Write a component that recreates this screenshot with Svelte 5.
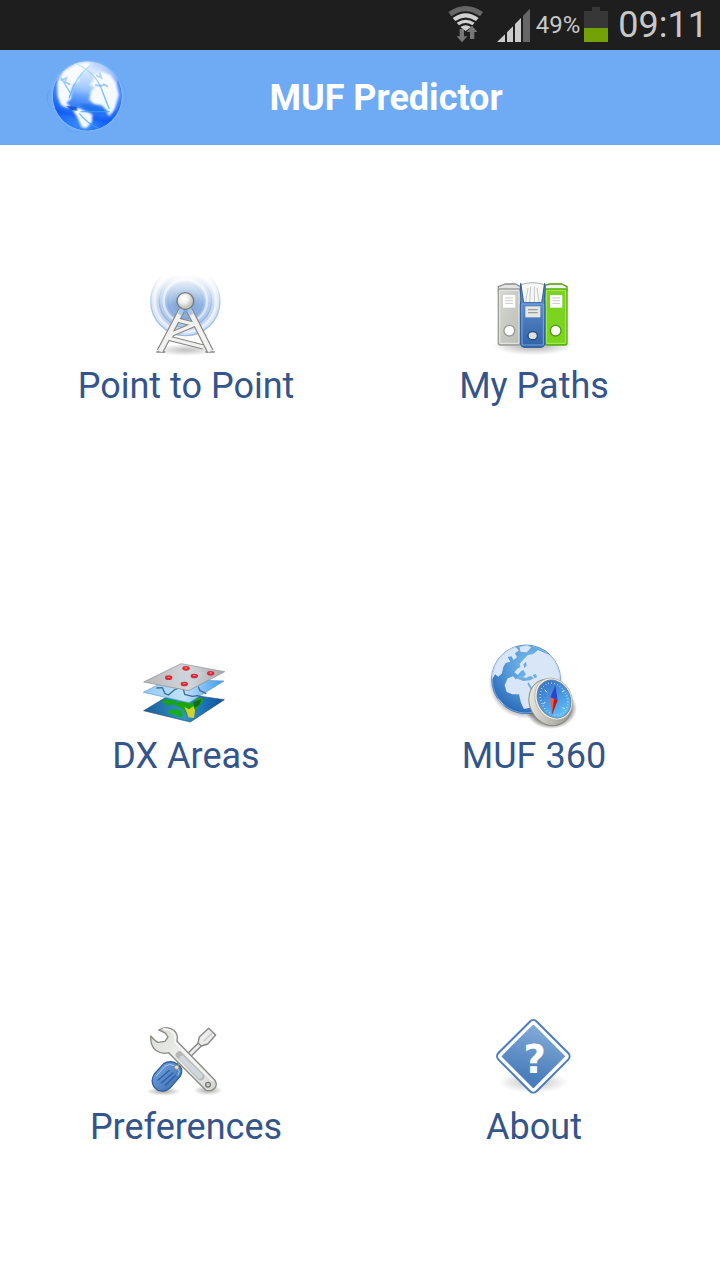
<script lang="ts">
    const battery: number = 49;
    const time: string = '09:11';

    type Item = { icon: string; label: string; viewBox: string };

    const items: Item[] = [
        { icon: 'tower', label: 'Point to Point', viewBox: '6 15 264 264' },
        { icon: 'folders', label: 'My Paths', viewBox: '15 15 264 264' },
        { icon: 'layers', label: 'DX Areas', viewBox: '21 -15 264 264' },
        { icon: 'compass', label: 'MUF 360', viewBox: '30 30 264 264' },
        { icon: 'tools', label: 'Preferences', viewBox: '6 3 264 264' },
        { icon: 'about', label: 'About', viewBox: '15 18 264 264' },
    ];
</script>

{#snippet tower()}
    <defs>
        <linearGradient id="fade" x1="0" y1="0" x2="0" y2="1">
            <stop offset="0.05" stop-color="#000" />
            <stop offset="0.5" stop-color="#ccc" />
            <stop offset="1" stop-color="#fff" />
        </linearGradient>
        <mask id="waveMask" maskUnits="userSpaceOnUse" x="0" y="0" width="288" height="288">
            <rect y="5" width="288" height="200" fill="url(#fade)" />
        </mask>
        <radialGradient id="waveFill">
            <stop offset="0" stop-color="#4179c4" />
            <stop offset="0.5" stop-color="#6695d4" stop-opacity="0.85" />
            <stop offset="1" stop-color="#a5c2ea" stop-opacity="0.4" />
        </radialGradient>
        <radialGradient id="ball" cx="0.4" cy="0.35">
            <stop offset="0" stop-color="#fff" />
            <stop offset="0.6" stop-color="#eeeeec" />
            <stop offset="1" stop-color="#c6c8c2" />
        </radialGradient>
        <radialGradient id="shadow">
            <stop offset="0" stop-color="#000" stop-opacity="0.25" />
            <stop offset="1" stop-color="#000" stop-opacity="0" />
        </radialGradient>
    </defs>
    <ellipse cx="137" cy="240" rx="95" ry="18" fill="url(#shadow)" />
    <g mask="url(#waveMask)">
        <circle cx="136" cy="93" r="106" fill="url(#waveFill)" />
        <g fill="none" stroke="#fff" stroke-opacity="0.55" stroke-width="8">
            <circle cx="136" cy="93" r="92" />
            <circle cx="136" cy="93" r="65" />
        </g>
        <g fill="none" stroke="#5a8fd4" stroke-opacity="0.5" stroke-width="4">
            <circle cx="136" cy="93" r="104" />
            <circle cx="136" cy="93" r="78" />
            <circle cx="136" cy="93" r="52" />
        </g>
    </g>
    <g fill="none" stroke-linejoin="round">
        <g stroke="#85877f" stroke-width="16">
            <path d="M111 150 164 163 96 192 88 205 190 231" />
            <path d="M124 122 60 244M149 122 211 244" stroke-width="21" />
        </g>
        <path d="M49 246H76M196 246H224" stroke="#85877f" stroke-width="5" />
        <g stroke="#f1f1ef" stroke-width="10">
            <path d="M111 150 164 163 96 192 88 205 190 231" />
            <path d="M124 122 60 244M149 122 211 244" stroke-width="14" />
        </g>
        <path d="M127 116 119 134M146 116 155 134" stroke="#a5c6ea" stroke-width="12" />
    </g>
    <circle cx="136" cy="93" r="25" fill="url(#ball)" stroke="#777a73" stroke-width="4" />
{/snippet}

{#snippet folders()}
    <defs>
        <linearGradient id="gray" x1="0" y1="0" x2="1" y2="1">
            <stop offset="0" stop-color="#d6d8d2" />
            <stop offset="1" stop-color="#babdb6" />
        </linearGradient>
        <linearGradient id="blue" x1="0" y1="0" x2="0" y2="1">
            <stop offset="0" stop-color="#6f9bd1" />
            <stop offset="1" stop-color="#2f62a8" />
        </linearGradient>
        <radialGradient id="folderShadow">
            <stop offset="0" stop-color="#000" stop-opacity="0.35" />
            <stop offset="1" stop-color="#000" stop-opacity="0" />
        </radialGradient>
    </defs>
    <ellipse cx="144" cy="226" rx="120" ry="30" fill="url(#folderShadow)" />
    <path d="M40 62V50L60 42H92L106 50V62Z" fill="#e3e4e1" stroke="#8c8f88" stroke-width="4" stroke-linejoin="round" />
    <rect x="40" y="57" width="66" height="168" rx="6" fill="url(#gray)" stroke="#9a9d96" stroke-width="4" />
    <path d="M44 61H102V220H44Z" fill="none" stroke="#e8e9e6" stroke-width="3" />
    <rect x="54" y="75" width="37" height="38" fill="#fff" />
    <path d="M61 84H84M61 92H84M61 100H84" stroke="#c9cbc7" stroke-width="3" />
    <circle cx="73" cy="182" r="16" fill="#fff" stroke="#989b94" stroke-width="4" />
    <path d="M180 62V46L194 42H230L246 50V62Z" fill="#f2f3ef" stroke="#4e9a06" stroke-width="4" stroke-linejoin="round" />
    <rect x="180" y="57" width="66" height="168" rx="6" fill="#7bd41f" stroke="#58a80c" stroke-width="4" />
    <path d="M184 61H242V220H184Z" fill="none" stroke="#a3f050" stroke-width="3" />
    <rect x="195" y="75" width="37" height="38" fill="#fff" />
    <path d="M202 84H225M202 92H225M202 100H225" stroke="#c9cbc7" stroke-width="3" />
    <circle cx="212" cy="182" r="16" fill="#fff" stroke="#4e9a06" stroke-width="4" />
    <path d="M108 44Q142 32 178 44L174 100H112Z" fill="#f6f7f5" stroke="#a7abb0" stroke-width="3" />
    <path d="M122 96 129 54M134 96 137 50M148 96V50M162 96 156 54" stroke="#c6c8c4" stroke-width="3" />
    <path d="M107 40Q104 62 108 88L106 105V222Q108 231 117 232H169Q178 231 180 222V105L178 88Q182 62 179 40L170 98H116Z" fill="url(#blue)" stroke="#2d5c9e" stroke-width="3" />
    <path d="M111 102H175V225H111Z" fill="none" stroke="#7ba5dc" stroke-width="3" />
    <rect x="121" y="109" width="45" height="33" fill="#e6e8e3" />
    <path d="M129 119H158M129 128H158" stroke="#9b9e98" stroke-width="4" />
    <ellipse cx="143" cy="197" rx="14" ry="12" fill="#dfe1dc" stroke="#204a87" stroke-width="4" />
{/snippet}

{#snippet layers()}
    <defs>
        <linearGradient id="sheet" x1="0" y1="0" x2="1" y2="0">
            <stop offset="0" stop-color="#b7b7b9" />
            <stop offset="0.55" stop-color="#d4d6da" />
            <stop offset="1" stop-color="#a5a8ad" />
        </linearGradient>
        <linearGradient id="sky" x1="0" y1="0" x2="1" y2="0">
            <stop offset="0" stop-color="#8fc8f5" />
            <stop offset="0.5" stop-color="#c2e2fb" />
            <stop offset="1" stop-color="#3a9af0" />
        </linearGradient>
        <linearGradient id="sea" x1="0" y1="0" x2="1" y2="0">
            <stop offset="0" stop-color="#1c5c9c" />
            <stop offset="0.5" stop-color="#2f94c4" />
            <stop offset="1" stop-color="#0c4ea4" />
        </linearGradient>
    </defs>
    <path d="M26 182 98 139 204 140 268 149 166 216Z" fill="url(#sea)" stroke="#244d70" stroke-width="2" />
    <path d="M78 155 96 148 126 152 121 162 98 167 88 160Z" fill="#14a51a" />
    <path d="M118 161 139 154 176 160 184 146 202 142 203 156 192 167 180 185 175 202 157 198 149 184 139 175 119 166Z" fill="#1da40f" />
    <path d="M148 171 162 178 175 169 180 181 177 204 160 202 156 188Z" fill="#d5cf35" />
    <path d="M98 184 116 177 138 181 144 195 135 203 122 194 103 191Z" fill="#16ac1c" />
    <path d="M174 155 200 148 193 165 179 174Z" fill="#146f1a" />
    <path d="M25 127 82 98 210 91 267 93 162 158Z" fill="url(#sky)" stroke="#5b9cd0" stroke-width="2" />
    <path d="M64 114 82 113 90 131 100 135 118 120 134 112M142 105 149 133 172 139 188 137 205 143M190 110 195 122 214 131" fill="none" stroke="#3e6c8e" stroke-width="4" stroke-linejoin="round" />
    <path d="M26 96 138 41 269 65 161 122Z" fill="url(#sheet)" stroke="#88898c" stroke-width="2" />
    <path d="M105 96 145 67 207 66 177 103Z" fill="#c6d2de" opacity="0.6" />
    {#each [[153, 55], [101, 83], [178, 78], [227, 70], [148, 102]] as [x, y]}
        <ellipse cx={x} cy={y} rx="11" ry="7" fill="#db2934" />
        <ellipse cx={x} cy={y - 1} rx="4" ry="2" fill="#ff8f8f" />
    {/each}
{/snippet}

{#snippet compass()}
    <defs>
        <radialGradient id="ocean" cx="0.6" cy="0.3" r="0.75">
            <stop offset="0" stop-color="#7fc3ee" />
            <stop offset="0.5" stop-color="#559adb" />
            <stop offset="1" stop-color="#2765b5" />
        </radialGradient>
        <linearGradient id="rim" x1="0" y1="0" x2="1" y2="1">
            <stop offset="0" stop-color="#f5f4ee" />
            <stop offset="0.5" stop-color="#c4c3bb" />
            <stop offset="1" stop-color="#8d8c84" />
        </linearGradient>
        <linearGradient id="dial" x1="0" y1="0" x2="0" y2="1">
            <stop offset="0" stop-color="#3873c8" />
            <stop offset="1" stop-color="#5fc0fb" />
        </linearGradient>
        <clipPath id="earth"><circle cx="138" cy="133" r="103" /></clipPath>
        <radialGradient id="globeShadow">
            <stop offset="0.7" stop-color="#000" stop-opacity="0.55" />
            <stop offset="1" stop-color="#000" stop-opacity="0" />
        </radialGradient>
    </defs>
    <ellipse cx="138" cy="143" rx="112" ry="108" fill="url(#globeShadow)" />
    <ellipse cx="213" cy="220" rx="78" ry="62" fill="url(#globeShadow)" />
    <circle cx="138" cy="133" r="103" fill="url(#ocean)" stroke="#2b65ac" stroke-width="2" />
    <g clip-path="url(#earth)" fill="#d8e6f7">
        <path d="M36 99 51 61 79 40 105 35 117 46 105 55 111 67 101 75 94 64 83 66 91 80 77 84 70 96 66 115 55 125 45 118 36 135Z" />
        <path d="M118 35 142 31 153 37 141 52 122 51Z" />
        <path d="M103 112 112 101 121 96 119 86 132 72 144 60 160 57 174 45 215 62 241 99 246 152 222 171 190 148 178 164 173 181 164 196 150 218 132 222 123 204 117 178 97 178 80 171 74 151 83 130 99 124 107 133 119 124 130 126 138 118 130 104 121 110 114 120Z" />
        <path d="M44 187 56 192 73 211 68 224 37 191Z" />
    </g>
    <g fill="#6eaee3">
        <path d="M106 129 120 124 138 129 152 122 162 130 150 136 130 138Z" />
        <path d="M130 88 138 80 140 92 133 99ZM158 120 168 117 171 127 164 130Z" />
        <path d="M146 142 163 170 157 172 142 146Z" />
    </g>
    <circle cx="138" cy="133" r="101" fill="none" stroke="#a6caed" stroke-opacity="0.55" stroke-width="3" />
    <ellipse cx="211" cy="202" rx="62" ry="72" transform="rotate(-28 211 202)" fill="url(#rim)" stroke="#8b8b83" stroke-width="3" />
    <ellipse cx="221" cy="192" rx="54" ry="65" transform="rotate(-28 221 192)" fill="#f1f0e9" stroke="#aaa99f" stroke-width="2" />
    <ellipse cx="222" cy="192" rx="48" ry="59" transform="rotate(-28 222 192)" fill="url(#dial)" stroke="#6783a3" stroke-width="3" />
    <ellipse cx="222" cy="192" rx="39" ry="50" transform="rotate(-28 222 192)" fill="none" stroke="#c4e0fb" stroke-width="5" stroke-dasharray="2 7" />
    <path d="M194 164 201 172M247 218 255 221M190 207 196 201M246 171 252 167" stroke="#dceeff" stroke-width="3" />
    <path d="M226 151 211 187 233 196Z" fill="#2946ce" />
    <path d="M211 187 215 242 222 193Z" fill="#ff5a37" />
    <path d="M222 192 215 242 233 196Z" fill="#bb1720" />
{/snippet}

{#snippet tools()}
    <defs>
        <linearGradient id="metal" x1="0" y1="0" x2="1" y2="1">
            <stop offset="0" stop-color="#d8dad5" />
            <stop offset="0.5" stop-color="#f1f2ef" />
            <stop offset="1" stop-color="#d4d6d0" />
        </linearGradient>
        <linearGradient id="handle" x1="0" y1="0" x2="1" y2="1">
            <stop offset="0" stop-color="#79a7df" />
            <stop offset="1" stop-color="#376bb0" />
        </linearGradient>
        <radialGradient id="toolShadow">
            <stop offset="0" stop-color="#000" stop-opacity="0.35" />
            <stop offset="1" stop-color="#000" stop-opacity="0" />
        </radialGradient>
    </defs>
    <ellipse cx="70" cy="229" rx="52" ry="13" fill="url(#toolShadow)" />
    <ellipse cx="204" cy="226" rx="44" ry="15" fill="url(#toolShadow)" />
    <path d="M113 154 184 84" stroke="#81847c" stroke-width="17" />
    <path d="M113 154 184 84" stroke="#eeefec" stroke-width="9" />
    <path d="M174 84 178 66 206 40 227 60 203 87 184 93Z" fill="#ecedea" stroke="#858880" stroke-width="4" stroke-linejoin="round" />
    <path d="M191 79 216 55" stroke="#c8cbc4" stroke-width="4" />
    <path d="M43 177 71 146Q85 137 103 142L118 152Q131 165 121 183L92 217Q76 233 54 226L43 217Q30 198 43 177Z" fill="url(#handle)" stroke="#315f9f" stroke-width="4" />
    <path d="M48 184 76 153Q90 144 103 152M115 160Q122 170 113 182" fill="none" stroke="#a5c8f0" stroke-width="3" />
    <path d="M55 195 88 166M64 204 98 174M76 211 107 181" stroke="#2c5fa6" stroke-width="4" stroke-linecap="round" />
    <path d="M56 45Q80 30 102 46Q116 60 111 79L225 196Q233 209 224 220Q212 232 197 225L86 113Q65 119 47 106Q30 90 32 63Q42 75 53 82L75 79L84 66L77 55Q65 47 56 45Z" fill="url(#metal)" stroke="#8a8d85" stroke-width="4" stroke-linejoin="round" />
    <path d="M69 42Q88 41 100 54Q108 66 105 82L218 198" fill="none" stroke="#fafaf9" stroke-width="4" />
    <path d="M118 120 182 185" stroke="#b4b8b7" stroke-width="22" stroke-linecap="round" />
    <path d="M126 130 180 183" stroke="#d0d7dc" stroke-width="16" stroke-linecap="round" />
    <circle cx="204" cy="209" r="7" fill="#cfd1cc" stroke="#777a73" stroke-width="4" />
    <circle cx="110" cy="157" r="7" fill="#d9dbd6" stroke="#888b83" stroke-width="3" />
{/snippet}

{#snippet about()}
    <defs>
        <linearGradient id="sign" x1="0" y1="0" x2="0.6" y2="1">
            <stop offset="0" stop-color="#82abd7" />
            <stop offset="1" stop-color="#4a7dbb" />
        </linearGradient>
        <radialGradient id="signShadow">
            <stop offset="0" stop-color="#000" stop-opacity="0.25" />
            <stop offset="1" stop-color="#000" stop-opacity="0" />
        </radialGradient>
    </defs>
    <ellipse cx="145" cy="217" rx="105" ry="32" fill="url(#signShadow)" />
    <rect x="64" y="58" width="162" height="162" rx="14" transform="rotate(45 145 139)" fill="#fff" stroke="#4a7dbb" stroke-width="6" />
    <rect x="77" y="71" width="136" height="136" rx="3" transform="rotate(45 145 139)" fill="url(#sign)" />
    <text x="149" y="188" text-anchor="middle" class="question">?</text>
{/snippet}

<div class="screen">
    <div class="status">
        <svg class="wifi" viewBox="0 0 108 150" aria-hidden="true">
            <path d="M1 36Q53 0 105 36L96 49Q53 18 10 49Z" fill="#666" />
            <path d="M14 54Q53 25 92 54L84 63Q53 42 22 63ZM26 68Q53 50 80 68L73 76Q53 62 33 76ZM37 81Q53 71 69 81L53 93Z" fill="#d0d0d0" />
            <path d="M35 87H48V109H58L42 127 26 109H35ZM66 117V96H56L72 77 88 96H79V117Z" fill="#777" />
        </svg>
        <svg class="signal" viewBox="0 0 99 150" aria-hidden="true">
            <path d="M0 126 24 103V126ZM30 97 48 79V126H30ZM54 72 72 54V126H54Z" fill="#ccc" />
            <path d="M78 47 99 26V126H78Z" fill="#666" />
        </svg>
        <span class="percent">{battery}%</span>
        <svg class="battery" viewBox="0 0 24 50" aria-hidden="true">
            <path d="M8 7H16V11H24V28H0V11H8Z" fill="#373737" />
            <rect y="28" width="24" height="14" fill="#73a108" />
        </svg>
        <span class="time">{time}</span>
    </div>

    <header>
        <svg class="logo" viewBox="0 0 288 285" aria-hidden="true">
            <defs>
                <linearGradient id="logoSea" x1="0.6" y1="0" x2="0.4" y2="1">
                    <stop offset="0" stop-color="#c5e1ff" />
                    <stop offset="0.4" stop-color="#8fc0ff" />
                    <stop offset="0.6" stop-color="#4a8ef8" />
                    <stop offset="0.8" stop-color="#1561f6" />
                    <stop offset="1" stop-color="#63bdff" />
                </linearGradient>
                <radialGradient id="logoEdge">
                    <stop offset="0.75" stop-color="#0754fb" stop-opacity="0" />
                    <stop offset="1" stop-color="#0754fb" stop-opacity="0.6" />
                </radialGradient>
                <linearGradient id="logoShine" x1="0" y1="0" x2="0" y2="1">
                    <stop offset="0" stop-color="#fff" stop-opacity="0.65" />
                    <stop offset="1" stop-color="#fff" stop-opacity="0" />
                </linearGradient>
                <filter id="soft"><feGaussianBlur stdDeviation="3" /></filter>
                <clipPath id="logoClip"><circle cx="142" cy="138" r="104" /></clipPath>
            </defs>
            <path d="M28 121Q10 156 39 178M234 85Q279 139 240 173M76 211Q68 237 98 246L137 242" fill="none" stroke="#4f9cf5" stroke-width="3" opacity="0.5" />
            <circle cx="142" cy="138" r="105" fill="#8fc2ff" opacity="0.8" filter="url(#soft)" />
            <circle cx="142" cy="138" r="103" fill="url(#logoSea)" />
            <g clip-path="url(#logoClip)">
                <circle cx="142" cy="138" r="104" fill="url(#logoEdge)" />
                <g fill="#f5faff" filter="url(#soft)">
                    <path d="M52 100 70 64 113 40 146 38 137 53 116 80 118 94 98 103 95 120 93 146 79 159 90 168 81 174 63 165 53 140Z" />
                    <path d="M148 105 161 90 158 76 182 66 210 74 228 100 236 134 225 175 208 199 186 166 162 163 148 149 153 123 165 111Z" />
                    <path d="M99 181 116 175 138 184 157 193 156 216 139 235 125 232 114 206Z" />
                    <path d="M91 53 136 37 158 42 134 65 104 68Z" />
                </g>
                <path d="M62 91 79 84 75 96 91 104M166 105 183 108 192 103 204 110M168 76 184 83 178 67" fill="none" stroke="#5591ef" stroke-width="6" opacity="0.6" />
                <path d="M119 163Q163 158 207 184L184 194 134 178Z" fill="#176ee9" opacity="0.7" filter="url(#soft)" />
                <path d="M155 43Q106 79 87 144M112 42Q162 67 181 108L208 178M117 185H210M118 190Q143 221 177 236M63 83 91 129" fill="none" stroke="#36a4f4" stroke-width="4" opacity="0.7" />
                <path d="M77 168 108 171 116 184 97 180Z" fill="#1253c9" opacity="0.8" />
                <ellipse cx="142" cy="84" rx="92" ry="54" fill="url(#logoShine)" />
            </g>
            <circle cx="116" cy="184" r="6" fill="#fff" filter="url(#soft)" />
            <circle cx="213" cy="180" r="6" fill="#e5f8ff" filter="url(#soft)" />
        </svg>
        <h1>MUF Predictor</h1>
    </header>

    <main>
        {#each items as item}
            <button type="button">
                <svg class="icon" viewBox={item.viewBox} aria-hidden="true">
                    {#if item.icon === 'tower'}
                        {@render tower()}
                    {:else if item.icon === 'folders'}
                        {@render folders()}
                    {:else if item.icon === 'layers'}
                        {@render layers()}
                    {:else if item.icon === 'compass'}
                        {@render compass()}
                    {:else if item.icon === 'tools'}
                        {@render tools()}
                    {:else}
                        {@render about()}
                    {/if}
                </svg>
                <span>{item.label}</span>
            </button>
        {/each}
    </main>
</div>

<style>
    :global(body) {
        background: #fff;
    }
    .screen {
        display: flex;
        flex-direction: column;
        min-height: 100vh;
        font-family: Roboto, "Noto Sans", sans-serif;
    }
    .status {
        display: flex;
        align-items: center;
        justify-content: flex-end;
        height: 50px;
        padding-right: 12px;
        background: #1e1e1e;
        color: #c8c8c8;
    }
    .status svg {
        height: 50px;
    }
    .wifi {
        width: 36px;
        margin-right: 13px;
    }
    .signal {
        width: 33px;
        margin-right: 6px;
    }
    .percent {
        margin-right: 4px;
        font-size: 24px;
    }
    .battery {
        width: 24px;
        margin-right: 10px;
    }
    .time {
        font-size: 36px;
    }
    header {
        display: flex;
        align-items: center;
        padding: 0 84px 0 40px;
        background: #6fabf4;
    }
    .logo {
        width: 96px;
        height: 95px;
    }
    h1 {
        flex: 1;
        margin: 0;
        color: #fff;
        font-size: 36px;
        font-weight: 700;
        line-height: 42px;
        text-align: center;
    }
    main {
        flex: 1;
        display: grid;
        grid-template-columns: 1fr 1fr;
        grid-auto-rows: 1fr;
        padding: 12px;
    }
    button {
        display: flex;
        flex-direction: column;
        align-items: center;
        justify-content: center;
        padding: 0;
        border: 0;
        background: none;
        color: #34558b;
        font-family: inherit;
        font-size: 36px;
        line-height: 46px;
        cursor: pointer;
    }
    .icon {
        width: 88px;
        height: 88px;
        overflow: visible;
    }
    .question {
        fill: #fff;
        font-family: "DejaVu Sans", sans-serif;
        font-size: 116px;
        font-weight: 700;
    }
</style>
